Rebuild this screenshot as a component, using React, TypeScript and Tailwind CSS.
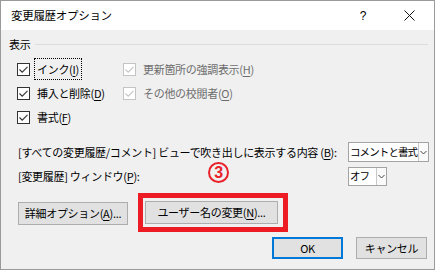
import React from "react";

function U({ k }: { k: string }) {
  return <span className="underline underline-offset-[2px]">{k}</span>;
}

function Check({ label, disabled, focus }: { label: React.ReactNode; disabled?: boolean; focus?: boolean }) {
  return (
    <div className="flex items-center h-[24px]">
      <div
        className={`w-[13px] h-[13px] border bg-white flex items-center justify-center ${
          disabled ? "border-[#c4c4c4]" : "border-[#333333]"
        }`}
      >
        <svg width="11" height="11" viewBox="0 0 11 11">
          <path
            d="M1.5 5.5 L4.2 8.2 L9.5 2.8"
            fill="none"
            stroke={disabled ? "#c4c4c4" : "#333333"}
            strokeWidth="1.1"
          />
        </svg>
      </div>
      <div
        className={`ml-[5px] px-[2px] h-[20px] flex items-center ${
          focus ? "outline outline-1 outline-dotted outline-black" : ""
        } ${disabled ? "text-[#6d6d6d]" : "text-black"}`}
      >
        {label}
      </div>
    </div>
  );
}

function Dropdown({ value, width }: { value: string; width: string }) {
  return (
    <div className={`flex h-full bg-white border border-[#a3a3a3] ${width}`}>
      <div className="flex-1 flex items-center pl-[1px] text-black whitespace-nowrap overflow-hidden text-[10.5px] tracking-[-0.9px]">
        {value}
      </div>
      <div className="w-[10px] border-l border-[#c8c8c8] flex items-center justify-center bg-[#fafafa]">
        <svg width="7" height="5" viewBox="0 0 7 5">
          <path d="M0.5 1 L3.5 4 L6.5 1" fill="none" stroke="#444" strokeWidth="1" />
        </svg>
      </div>
    </div>
  );
}

function Button({ children, className = "" }: { children: React.ReactNode; className?: string }) {
  return (
    <div
      className={`h-[23px] bg-[#e1e1e1] border border-[#adadad] flex items-center justify-center text-black whitespace-nowrap ${className}`}
    >
      {children}
    </div>
  );
}

export default function App() {
  return (
    <div className="w-[438px] h-[273px] bg-white font-['Noto_Sans_CJK_JP',sans-serif] text-[11px] leading-none tracking-[-0.3px]">
      <div className="w-[435px] h-[270px] border border-[#9a9a9a] flex flex-col">
        <div className="h-[29px] bg-white flex items-center pl-[10px]">
          <span className="text-[11.5px] text-black">変更履歴オプション</span>
          <span className="ml-auto text-[12px] text-black font-['Liberation_Sans',sans-serif]">?</span>
          <svg className="ml-[38px] mr-[19px]" width="11" height="11" viewBox="0 0 11 11">
            <path d="M0.5 0.5 L10.5 10.5 M10.5 0.5 L0.5 10.5" stroke="#111" strokeWidth="1" />
          </svg>
        </div>
        <div className="flex-1 bg-[#f0f0f0] flex flex-col pt-[6px] relative">
          <div className="flex items-center h-[16px] pl-[8px] pr-[6px]">
            <span className="text-black">表示</span>
            <div className="flex-1 ml-[5px] h-px bg-[#dcdcdc]" />
          </div>
          <div className="mt-[5px] pl-[16px] grid grid-cols-[106px_1fr]">
            <Check
              focus
              label={
                <>
                  インク(<U k="I" />)
                </>
              }
            />
            <Check
              disabled
              label={
                <>
                  更新箇所の強調表示(<U k="H" />)
                </>
              }
            />
            <Check
              label={
                <>
                  挿入と削除(<U k="D" />)
                </>
              }
            />
            <Check
              disabled
              label={
                <>
                  その他の校閲者(<U k="O" />)
                </>
              }
            />
            <Check
              label={
                <>
                  書式(<U k="F" />)
                </>
              }
            />
          </div>
          <div className="mt-[13px] h-[20px] flex items-center pl-[17px]">
            <span className="w-[330px] whitespace-nowrap text-black">
              [すべての変更履歴/コメント] ビューで吹き出しに表示する内容 (<U k="B" />):
            </span>
            <Dropdown value="コメントと書式" width="w-[81px]" />
          </div>
          <div className="mt-[5px] h-[19px] flex items-center pl-[17px] relative">
            <span className="w-[330px] whitespace-nowrap text-black">
              [変更履歴] ウィンドウ(<U k="P" />):
            </span>
            <Dropdown value="オフ" width="w-[39px]" />
            <div className="absolute left-[207px] top-[-5px] w-[21px] h-[21px] rounded-full border-2 border-[#e8212a] flex items-center justify-center text-[#e8212a] font-bold text-[16px] font-['Liberation_Sans',sans-serif]">
              3
            </div>
          </div>
          <div className="mt-[7px] h-[39px] flex items-start pl-[17px]">
            <Button className="mt-[9px] w-[110px]">
              詳細オプション(<U k="A" />)...
            </Button>
            <div className="ml-[10px] w-[150px] h-[39px] border-[5px] border-[#ed1c24] pl-[2px] pt-[3px]">
              <Button className="w-[133px]">
                ユーザー名の変更(<U k="N" />)...
              </Button>
            </div>
          </div>
          <div className="mt-[5px] flex justify-end gap-[13px] pr-[7px]">
            <div className="w-[71px] h-[22px] border-2 border-[#0078d7] bg-[#e1e1e1] flex items-center justify-center text-black">
              OK
            </div>
            <div className="w-[71px] h-[22px] border border-[#adadad] bg-[#e1e1e1] flex items-center justify-center text-black">
              キャンセル
            </div>
          </div>
        </div>
      </div>
    </div>
  );
}
